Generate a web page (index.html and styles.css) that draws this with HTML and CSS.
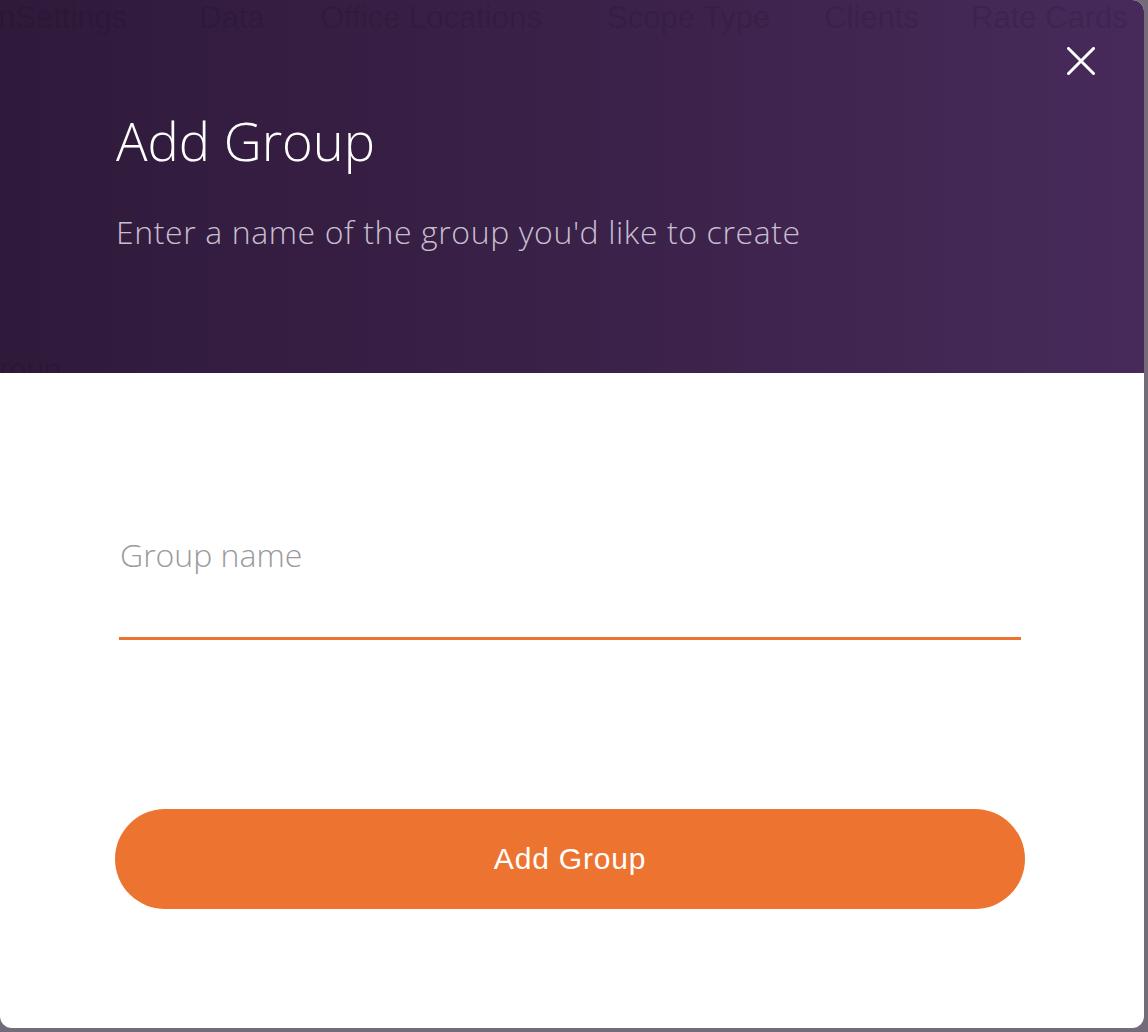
FILE: index.html
```html
<!DOCTYPE html>
<html>
<head>
<meta charset="utf-8">
<link rel="stylesheet" href="styles.css">
</head>
<body>
<div class="modal">
  <header class="modal-head">
    <div class="behind behind-tabs">
      <span class="t1">nSettings</span>
      <span class="t2">Data</span>
      <span class="t3">Office Locations</span>
      <span class="t4">Scope Type</span>
      <span class="t5">Clients</span>
      <span class="t6">Rate Cards</span>
    </div>
    <div class="behind behind-group">roup</div>
    <button class="close" aria-label="Close">
      <svg width="28" height="28" viewBox="0 0 28 28"><path d="M1.5 1.5 L26.5 26.5 M26.5 1.5 L1.5 26.5" stroke="#fff" stroke-width="3" stroke-linecap="square" fill="none"/></svg>
    </button>
    <h1 class="title">Add Group</h1>
    <p class="subtitle">Enter a name of the group you'd like to create</p>
  </header>
  <section class="modal-body">
    <label class="field">
      <span class="field-label">Group name</span>
      <span class="field-line"></span>
    </label>
    <button class="submit">Add Group</button>
  </section>
</div>
</body>
</html>
```
FILE: styles.css
```css
html, body {
  margin: 0;
  padding: 0;
}
body {
  width: 1148px;
  height: 1032px;
  background: #736b79;
  overflow: hidden;
  font-family: "Open Sans", "Liberation Sans", sans-serif;
}
.modal {
  width: 1144px;
  height: 1028px;
  background: #fff;
  border-radius: 0 12px 12px 12px;
  overflow: hidden;
  display: flex;
  flex-direction: column;
}
.modal-head {
  position: relative;
  height: 373px;
  box-sizing: border-box;
  padding: 104px 0 0 116px;
  overflow: hidden;
  background: linear-gradient(90deg, #2f1a3b 0%, #3a2148 50%, #472a5a 100%);
}
.behind {
  position: absolute;
  font-family: "Liberation Sans", Arial, sans-serif;
  color: rgba(0, 0, 10, 0.11);
  font-size: 31px;
  line-height: 36px;
  white-space: nowrap;
}
.behind-tabs {
  top: 0;
  left: 0;
  right: 0;
  height: 40px;
}
.behind-tabs span {
  position: absolute;
  top: 0;
}
.t1 { left: -2px; }
.t2 { left: 199px; }
.t3 { left: 320px; }
.t4 { left: 607px; }
.t5 { left: 824px; }
.t6 { left: 971px; }
.behind-group {
  left: -1px;
  top: 352px;
}
.close {
  position: absolute;
  top: 47px;
  left: 1067px;
  width: 28px;
  height: 28px;
  padding: 0;
  border: 0;
  background: none;
  display: block;
}
.close svg {
  display: block;
}
.title {
  position: relative;
  margin: 0;
  font-weight: 300;
  font-size: 52.5px;
  line-height: 74px;
  color: #fff;
}
.subtitle {
  position: relative;
  margin: 34px 0 0;
  font-weight: 300;
  font-size: 32px;
  letter-spacing: 0.6px;
  line-height: 40px;
  color: #c8bed0;
  white-space: nowrap;
}
.modal-body {
  flex: 1;
  padding: 0 119px 0 115px;
  display: flex;
  flex-direction: column;
}
.field {
  display: flex;
  flex-direction: column;
  margin: 162px 0 0 4px;
  padding-right: 4px;
}
.field-label {
  font-weight: 300;
  font-size: 32px;
  line-height: 40px;
  color: #9a9a9a;
  padding-left: 1px;
}
.field-line {
  display: block;
  height: 3px;
  margin-top: 62px;
  background: #ed7430;
}
.submit {
  margin-top: 169px;
  height: 100px;
  border: 0;
  border-radius: 50px;
  background: #ed7430;
  color: #fff;
  font-family: "Liberation Sans", Arial, sans-serif;
  font-size: 30px;
  letter-spacing: 0.8px;
  padding: 0;
}
```
